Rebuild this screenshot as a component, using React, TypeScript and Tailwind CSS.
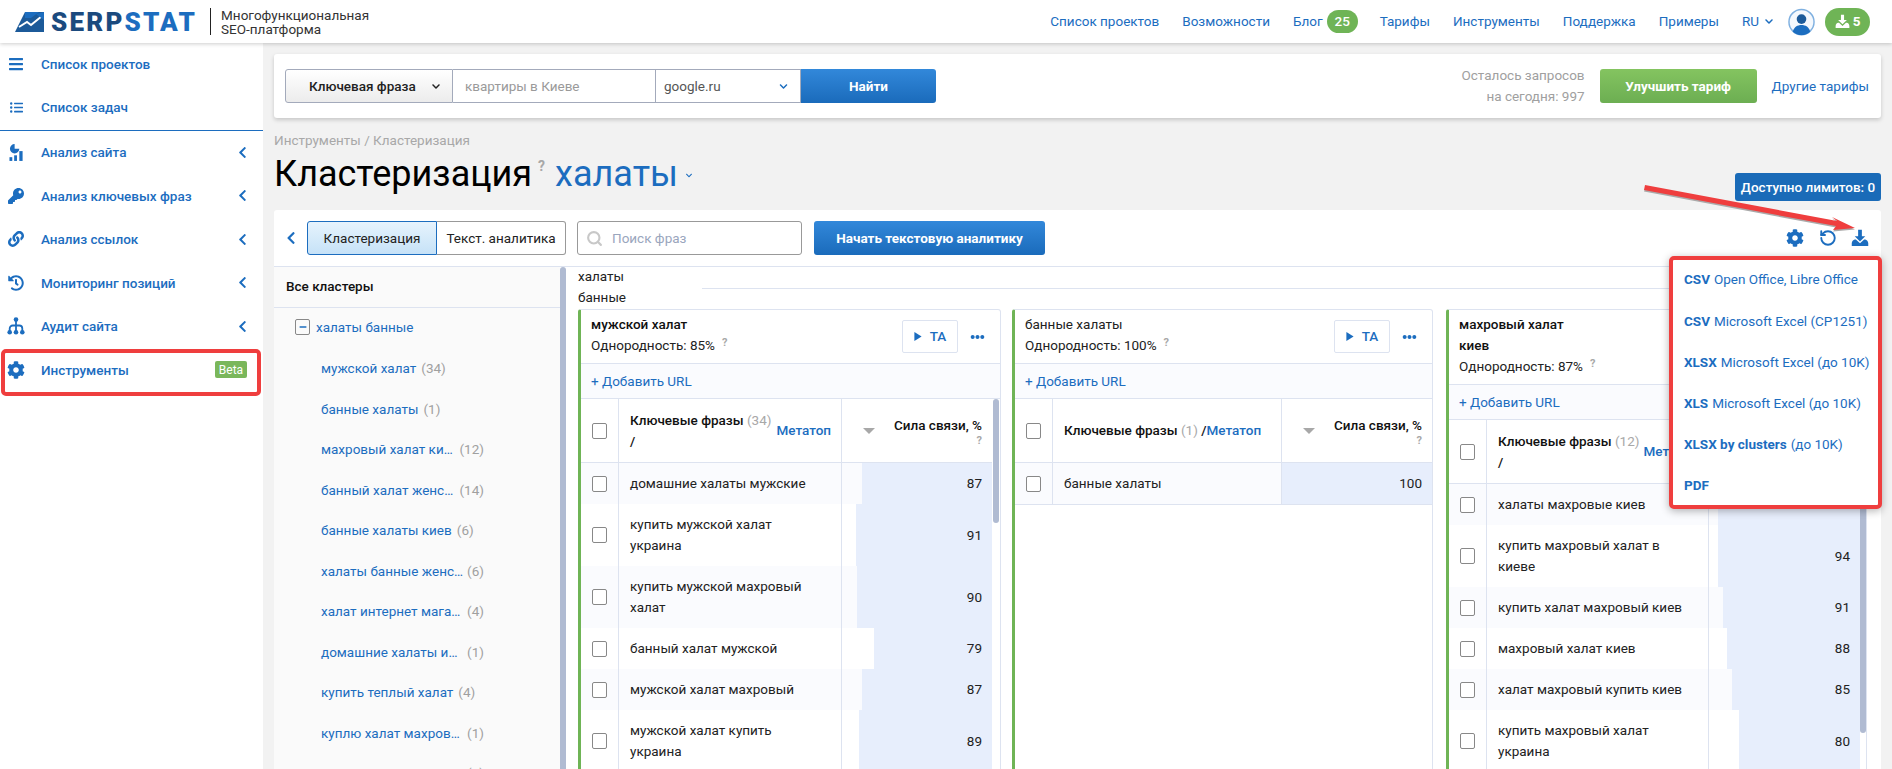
import { FaBars, FaListUl, FaKey, FaLink, FaHistory, FaCog, FaChevronLeft, FaChevronDown, FaEllipsisH, FaMinus } from 'react-icons/fa'
import { RotateCcw, Search } from 'lucide-react'

const BLUE = 'text-[#1c6dbf]'

function DownloadIcon({ className }: { className?: string }) {
  return (
    <svg viewBox="0 0 24 24" fill="currentColor" className={className}>
      <path d="M9.5 1h5v8.5H19L12 16.5 5 9.5h4.5z" />
      <path d="M1 19c0-2 2-5 4-5h1.5L12 19l5.5-5H19c2 0 4 3 4 5v3.5H1z" />
    </svg>
  )
}

function StatsIcon() {
  return (
    <svg viewBox="0 0 16 18" fill="currentColor" className="h-[17px] w-[15px]">
      <path d="M6 0a5 5 0 1 0 5 5H6z" />
      <rect x="0.5" y="14" width="3" height="4" />
      <rect x="5.5" y="12" width="3" height="6" />
      <rect x="11" y="7.5" width="3.5" height="10.5" />
    </svg>
  )
}

function TreeIcon() {
  return (
    <svg viewBox="0 0 18 18" className="h-[18px] w-[18px]">
      <path d="M9 3v12M2.7 14v-2.5a3 3 0 0 1 3-3h6.6a3 3 0 0 1 3 3V14" fill="none" stroke="currentColor" strokeWidth="1.8" />
      <circle cx="9" cy="2.6" r="2.3" fill="currentColor" />
      <circle cx="2.7" cy="15.3" r="2.3" fill="currentColor" />
      <circle cx="9" cy="15.3" r="2.3" fill="currentColor" />
      <circle cx="15.3" cy="15.3" r="2.3" fill="currentColor" />
    </svg>
  )
}

function Logo() {
  return (
    <div className="flex items-center">
      <svg viewBox="0 0 29 20" className="h-[20px] w-[29px]">
        <polygon points="0,20 10,0 29,0 29,20" fill="#1c5a99" />
        <polygon points="10,0 24,0 16,6 10,6" fill="#1c6dbf" />
        <polyline points="4,15 12,10 16,13 27,4" fill="none" stroke="#fff" strokeWidth="2" />
        <polygon points="21,2 29,0 29,8" fill="#1c6dbf" />
      </svg>
      <span className="ml-[7px] text-[26px] leading-none font-black tracking-[2.2px]">
        <span className="text-[#1b4a7e]">SERP</span>
        <span className="text-[#1c6dbf]">STAT</span>
      </span>
      <div className="ml-[13px] mr-[10px] h-[27px] w-px bg-[#222]" />
      <div className="text-[13.5px] leading-[14px] text-[#333]">
        Многофункциональная
        <br />
        SEO-платформа
      </div>
    </div>
  )
}

function TopNav() {
  const links = ['Список проектов', 'Возможности']
  const after = ['Тарифы', 'Инструменты', 'Поддержка', 'Примеры']
  return (
    <div className={`flex items-center text-[13.5px] ${BLUE}`}>
      {links.map((l) => (
        <span key={l} className="mr-[23px]">{l}</span>
      ))}
      <span>Блог</span>
      <span className="ml-[4px] mr-[22px] flex h-[23px] w-[31px] items-center justify-center rounded-full bg-[#6fb456] font-medium text-white">25</span>
      {after.map((l) => (
        <span key={l} className="mr-[23px]">{l}</span>
      ))}
      <span>RU</span>
      <FaChevronDown className="ml-[5px] mr-[14px] h-[9px] w-[10px]" />
      <svg viewBox="0 0 28 28" className="h-[28px] w-[27px]">
        <circle cx="14" cy="14" r="13" fill="#f4f8fd" stroke="#7fb0e0" strokeWidth="1.5" />
        <circle cx="14" cy="11" r="5" fill="#1c5a99" />
        <path d="M5 24c1-5 5-7 9-7s8 2 9 7a13 13 0 0 1-18 0z" fill="#1c6dbf" />
      </svg>
      <div className="ml-[10px] flex h-[28px] w-[45px] items-center justify-center gap-[3px] rounded-full bg-[#6fb456] font-bold text-white">
        <DownloadIcon className="h-[15px] w-[15px]" />
        <span>5</span>
      </div>
    </div>
  )
}

const sideItems = [
  { label: 'Анализ сайта', icon: <StatsIcon /> },
  { label: 'Анализ ключевых фраз', icon: <FaKey className="h-[16px] w-[16px]" /> },
  { label: 'Анализ ссылок', icon: <FaLink className="h-[16px] w-[16px]" /> },
  { label: 'Мониторинг позиций', icon: <FaHistory className="h-[16px] w-[16px]" /> },
  { label: 'Аудит сайта', icon: <TreeIcon /> },
]

function SideRow({ icon, label, chevron, beta }: { icon: React.ReactNode; label: string; chevron?: boolean; beta?: boolean }) {
  return (
    <div className={`flex h-[43.5px] items-center pl-[7px] text-[13.5px] font-medium ${BLUE}`}>
      <div className="flex w-[18px] justify-center">{icon}</div>
      <span className="ml-[16px] flex-1">{label}</span>
      {chevron && <FaChevronLeft className="mr-[16px] h-[13px] w-[9px]" />}
      {beta && (
        <span className="mr-[16px] flex h-[17px] w-[32px] items-center justify-center rounded-[2px] bg-[#7ab75b] text-[12px] font-normal text-white">Beta</span>
      )}
    </div>
  )
}

function Sidebar() {
  return (
    <aside className="w-[263px] shrink-0 bg-white">
      <div className="-mt-[1px]">
        <SideRow icon={<FaBars className="h-[16px] w-[16px]" />} label="Список проектов" />
      </div>
      <SideRow icon={<FaListUl className="h-[13px] w-[13px]" />} label="Список задач" />
      <div className="mt-[1px] h-px bg-[#1c6dbf]" />
      <div className="-mt-[0.5px]">
        {sideItems.map((i) => (
          <SideRow key={i.label} icon={i.icon} label={i.label} chevron />
        ))}
      </div>
      <div className="relative">
        <SideRow icon={<FaCog className="h-[18px] w-[18px]" />} label="Инструменты" beta />
        <div className="absolute left-[1px] top-[1px] h-[47px] w-[260px] rounded-[5px] border-[4px] border-[#ef3e3e]" />
      </div>
    </aside>
  )
}

function SearchBar() {
  return (
    <div className="flex h-[64px] items-center rounded-[3px] bg-white pl-[11px] pr-[12px] shadow-[0_2px_4px_rgba(0,0,0,0.18)]">
      <div className="flex h-[34px] w-[168px] items-center rounded-l-[3px] border border-[#a3aabb] bg-gradient-to-b from-white to-[#ececec] pl-[23px] pr-[11px] text-[13.5px] font-medium text-[#222]">
        <span className="flex-1">Ключевая фраза</span>
        <FaChevronDown className="h-[9px] w-[10px]" />
      </div>
      <div className="flex h-[34px] w-[202px] items-center border-y border-[#a3aabb] pl-[12px] text-[13.5px] text-[#9a9a9a]">квартиры в Киеве</div>
      <div className="flex h-[34px] w-[146px] items-center border border-[#a3aabb] pl-[8px] pr-[11px] text-[13.5px] text-[#555]">
        <span className="flex-1">google.ru</span>
        <FaChevronDown className={`h-[9px] w-[11px] ${BLUE}`} />
      </div>
      <div className="flex h-[34px] w-[135px] items-center justify-center rounded-r-[3px] bg-gradient-to-b from-[#3288da] to-[#1a6bbb] text-[13.5px] font-bold text-white">Найти</div>
      <div className="ml-auto text-right text-[13.5px] leading-[21px] text-[#a0a0a0]">
        Осталось запросов
        <br />
        на сегодня: 997
      </div>
      <div className="ml-[15px] flex h-[34px] w-[157px] items-center justify-center rounded-[3px] bg-gradient-to-b from-[#84c460] to-[#6cae52] text-[13.5px] font-bold text-white">Улучшить тариф</div>
      <span className={`ml-[15px] text-[13.5px] ${BLUE}`}>Другие тарифы</span>
    </div>
  )
}

function TitleRow() {
  return (
    <div className="flex h-[92px] flex-col">
      <div className="mt-[13px] text-[13.5px] leading-[18px] text-[#a8a8a8]">Инструменты / Кластеризация</div>
      <div className="flex flex-1 items-start justify-between">
        <div className="mt-[3px] flex items-start">
          <h1 className="text-[36px] leading-[44px] text-black">Кластеризация</h1>
          <span className="ml-[6px] mt-[4px] text-[14px] font-bold text-[#a8a8a8]">?</span>
          <span className={`ml-[10px] text-[36px] leading-[44px] ${BLUE}`}>халаты</span>
          <FaChevronDown className={`ml-[6px] mt-[20px] h-[7px] w-[10px] ${BLUE}`} />
        </div>
        <div className="mt-[24px] flex h-[28px] w-[146px] items-center justify-center rounded-[3px] bg-[#1a6bb8] text-[13.5px] font-medium text-white">Доступно лимитов: 0</div>
      </div>
    </div>
  )
}

function Toolbar() {
  return (
    <div className="flex h-[56px] shrink-0 items-center pl-[12px] pr-[12px] text-[13.5px]">
      <FaChevronLeft className={`mr-[11px] h-[14px] w-[10px] ${BLUE}`} />
      <div className="flex h-[34px] w-[130px] items-center justify-center rounded-l-[3px] border border-[#1c6dbf] bg-gradient-to-b from-[#e6f3fd] to-[#c6e2f7] text-[#222]">Кластеризация</div>
      <div className="flex h-[34px] w-[129px] items-center justify-center rounded-r-[3px] border border-l-0 border-[#999] text-[#222]">Текст. аналитика</div>
      <div className="ml-[11px] flex h-[34px] w-[225px] items-center rounded-[3px] border border-[#999] pl-[8px] text-[#9aa6bd]">
        <Search className="h-[17px] w-[17px] text-[#c8c8c8]" strokeWidth={3} />
        <span className="ml-[9px]">Поиск фраз</span>
      </div>
      <div className="ml-[12px] flex h-[34px] w-[231px] items-center justify-center rounded-[3px] bg-gradient-to-b from-[#3288da] to-[#1a6bbb] font-bold text-white">Начать текстовую аналитику</div>
      <div className={`ml-auto flex items-center ${BLUE}`}>
        <FaCog className="h-[18px] w-[18px]" />
        <RotateCcw className="ml-[15px] h-[18px] w-[18px]" strokeWidth={2.5} />
        <DownloadIcon className="ml-[14px] h-[18px] w-[18px]" />
      </div>
    </div>
  )
}

const clusterItems = [
  ['мужской халат', 34],
  ['банные халаты', 1],
  ['махровый халат ки…', 12],
  ['банный халат женс…', 14],
  ['банные халаты киев', 6],
  ['халаты банные женс…', 6],
  ['халат интернет мага…', 4],
  ['домашние халаты и…', 1],
  ['купить теплый халат', 4],
  ['куплю халат махров…', 1],
  ['халаты махровые же…', 4],
] as const

function ClusterPanel() {
  return (
    <div className="flex w-[292px] shrink-0">
      <div className="w-[286px] bg-[#fafafa]">
        <div className="flex h-[41px] items-center border-b border-[#dde3f0] pb-[1px] pl-[12px] text-[13.5px] font-medium text-[#111]">Все кластеры</div>
        <div className="flex h-[40px] items-center pb-[2px] pl-[21px] text-[13.5px]">
          <div className="flex h-[16px] w-[15px] items-center justify-center rounded-[2px] border border-[#888]">
            <FaMinus className={`h-[8px] w-[8px] ${BLUE}`} />
          </div>
          <span className={`ml-[6px] ${BLUE}`}>халаты банные</span>
        </div>
        <div className="pl-[47px] text-[13.5px]">
          {clusterItems.map(([name, count]) => (
            <div key={name} className="flex h-[40.5px] w-[163px] items-center whitespace-nowrap">
              <span className={BLUE}>{name}</span>
              <span className={`shrink-0 text-[#a0a0a0] ${name.endsWith('…') ? 'ml-auto' : 'ml-[5px]'}`}>({count})</span>
            </div>
          ))}
        </div>
      </div>
      <div className="h-full w-[6px] rounded-t-[3px] bg-[#b0bbd2]" />
    </div>
  )
}

function Check() {
  return <div className="h-[16px] w-[15px] shrink-0 rounded-[2px] border border-[#888] bg-white" />
}

function HelpMark({ className }: { className?: string }) {
  return <span className={`text-[11px] leading-none font-bold text-[#a8a8a8] ${className ?? ''}`}>?</span>
}

type Column = {
  title: string[]
  bold?: boolean
  score: number
  count: number
  inlineMeta?: boolean
  scrollbarHeight?: number
  width: string
  gutter: string
  thumb?: string
  phraseWidth: string
  rows: [string, number][]
}

const columns: Column[] = [
  {
    title: ['мужской халат'],
    bold: true,
    score: 85,
    count: 34,
    scrollbarHeight: 124,
    width: 'w-[423px]',
    gutter: 'pr-[8px]',
    thumb: 'right-[1px]',
    phraseWidth: 'w-[223px]',
    rows: [
      ['домашние халаты мужские', 87],
      ['купить мужской халат украина', 91],
      ['купить мужской махровый халат', 90],
      ['банный халат мужской', 79],
      ['мужской халат махровый', 87],
      ['мужской халат купить украина', 89],
    ],
  },
  {
    title: ['банные халаты'],
    score: 100,
    count: 1,
    inlineMeta: true,
    width: 'w-[421px]',
    gutter: 'pr-0',
    phraseWidth: 'w-[229px]',
    rows: [['банные халаты', 100]],
  },
  {
    title: ['махровый халат', 'киев'],
    bold: true,
    score: 87,
    count: 12,
    scrollbarHeight: 313,
    width: 'w-[421px]',
    gutter: 'pr-[6px]',
    thumb: 'right-0',
    phraseWidth: 'w-[222px]',
    rows: [
      ['халаты махровые киев', 94],
      ['купить махровый халат в киеве', 94],
      ['купить халат махровый киев', 91],
      ['махровый халат киев', 88],
      ['халат махровый купить киев', 85],
      ['купить махровый халат украина', 80],
    ],
  },
]

function ClusterColumn({ col }: { col: Column }) {
  return (
    <div className={`flex h-[600px] shrink-0 flex-col rounded-[3px] border border-l-[3px] border-[#dde3f0] border-l-[#6fb456] bg-white ${col.width}`}>
      <div className="flex border-b border-[#dde3f0] pb-[7px] pl-[10px] pr-[14px] pt-[4px] text-[13.5px] leading-[21px] text-[#222]">
        <div className="flex-1">
          {col.title.map((t) => (
            <div key={t} className={col.bold ? 'font-medium text-[#111]' : ''}>{t}</div>
          ))}
          <div>
            Однородность: {col.score}%<HelpMark className="ml-[7px] align-[4px]" />
          </div>
        </div>
        <div className="mt-[6px] flex h-[33px] w-[56px] items-center justify-center rounded-[2px] border border-[#dde3f0] font-medium">
          <svg viewBox="0 0 8 10" className="h-[9px] w-[8px]"><polygon points="0,0 8,5 0,10" fill="#1c6dbf" /></svg>
          <span className={`ml-[8px] ${BLUE}`}>ТА</span>
        </div>
        <FaEllipsisH className={`ml-[11px] mt-[16px] h-[14px] w-[17px] ${BLUE}`} />
      </div>
      <div className={`flex h-[35px] shrink-0 items-center border-b border-[#dde3f0] bg-[#fafbfe] pl-[10px] text-[13.5px] ${BLUE}`}>+ Добавить URL</div>
      <div className={`relative flex-1 text-[13.5px] leading-[21px] text-[#222] ${col.gutter}`}>
        {col.scrollbarHeight && (
          <div
            className={`absolute top-0 w-[6px] rounded-[3px] bg-[#b0bbd2] ${col.thumb}`}
            style={{ height: col.scrollbarHeight }}
          />
        )}
        <div className="flex h-[64px] border-b border-[#dde3f0]">
          <div className="flex w-[38px] items-center justify-center border-r border-[#dde3f0]"><Check /></div>
          <div className={`flex items-center justify-between border-r border-[#dde3f0] pl-[11px] pr-[10px] ${col.phraseWidth}`}>
            {col.inlineMeta ? (
              <div className="font-medium text-[#111]">
                Ключевые фразы <span className="font-normal text-[#a8a8a8]">({col.count})</span> /<span className={BLUE}>Метатоп</span>
              </div>
            ) : (
              <>
                <div className="w-[147px] font-medium text-[#111]">
                  Ключевые фразы <span className="font-normal text-[#a8a8a8]">({col.count})</span> /
                </div>
                <span className={`font-medium ${BLUE}`}>Метатоп</span>
              </>
            )}
          </div>
          <div className="flex flex-1 items-center justify-between pl-[21px] pr-[10px]">
            <div className="h-0 w-0 border-x-[6px] border-t-[6px] border-x-transparent border-t-[#a8a8a8]" />
            <div className="text-right font-medium text-[#111]">
              Сила связи, %
              <div className="mt-[-4px] leading-[14px]"><HelpMark /></div>
            </div>
          </div>
        </div>
        {col.rows.map(([phrase, value], i) => (
          <div key={phrase} className={`flex border-[#dde3f0] ${i % 2 === 0 ? 'bg-[#fafbfe]' : 'bg-white'} ${col.inlineMeta ? 'border-b' : ''}`}>
            <div className="flex w-[38px] shrink-0 items-center justify-center border-r border-[#dde3f0]"><Check /></div>
            <div className={`shrink-0 border-r border-[#dde3f0] py-[10px] pl-[11px] pr-[22px] ${col.phraseWidth}`}>{phrase}</div>
            <div className="relative flex flex-1 items-center justify-end pr-[10px]">
              <div className="absolute inset-y-0 right-0 bg-[#e7eefc]" style={{ width: `${value}%` }} />
              <span className="relative">{value}</span>
            </div>
          </div>
        ))}
      </div>
    </div>
  )
}

function Results() {
  return (
    <div className="min-w-0 flex-1 pl-[12px]">
      <div className="-mt-px flex h-[43px] text-[13.5px] leading-[21px] text-[#222]">
        <div className="w-[124px]">халаты<br />банные</div>
        <div className="mt-[22px] h-px flex-1 bg-[#dde3f0]" />
      </div>
      <div className="flex">
        {columns.map((c, i) => (
          <div key={c.title[0]} className={i === 0 ? 'mr-[11px]' : i === 1 ? 'mr-[13px]' : ''}>
            <ClusterColumn col={c} />
          </div>
        ))}
      </div>
    </div>
  )
}

const exportItems = [
  ['CSV', 'Open Office, Libre Office'],
  ['CSV', 'Microsoft Excel (CP1251)'],
  ['XLSX', 'Microsoft Excel (до 10K)'],
  ['XLS', 'Microsoft Excel (до 10K)'],
  ['XLSX by clusters', '(до 10K)'],
  ['PDF', ''],
]

function ExportMenu() {
  return (
    <div className="absolute left-[1669px] top-[256px] flex h-[253px] w-[213px] flex-col justify-center rounded-[5px] border-[4px] border-[#ef3e3e] bg-white pl-[11px] text-[13.5px] shadow-[0_2px_8px_rgba(0,0,0,0.3)]">
      {exportItems.map(([a, b], i) => (
        <div key={i} className={`flex h-[41.2px] shrink-0 items-center whitespace-nowrap ${BLUE}`}>
          <span className="font-bold">{a}</span>
          {b && <span className="ml-[4px]">{b}</span>}
        </div>
      ))}
    </div>
  )
}

function RedArrow() {
  return (
    <svg className="pointer-events-none absolute left-0 top-0 h-[769px] w-[1892px]" viewBox="0 0 1892 769">
      <polygon points="1645,187 1837,221 1832,217 1855,228 1833,230 1836,226 1644,190" fill="#aaa" transform="translate(0,1.5)" />
      <polygon points="1645,185 1837,221 1832,217 1855,228 1833,230 1836,226 1644,190" fill="#ef3e3e" />
    </svg>
  )
}

export default function App() {
  return (
    <div className="relative flex h-[769px] w-[1892px] flex-col overflow-hidden bg-[#f2f2f2] [font-family:Roboto,sans-serif]">
      <header className="relative z-10 flex h-[43px] shrink-0 items-center justify-between bg-white pl-[15px] pr-[22px] shadow-[0_1px_4px_rgba(0,0,0,0.2)]">
        <Logo />
        <TopNav />
      </header>
      <div className="flex min-h-0 flex-1">
        <Sidebar />
        <main className="flex min-w-0 flex-1 flex-col pl-[11px] pr-[11px] pt-[11px]">
          <SearchBar />
          <TitleRow />
          <div className="min-h-0 flex-1 rounded-t-[3px] bg-white">
            <Toolbar />
            <div className="flex h-full border-t border-[#dde3f0]">
              <ClusterPanel />
              <Results />
            </div>
          </div>
        </main>
      </div>
      <ExportMenu />
      <RedArrow />
    </div>
  )
}
